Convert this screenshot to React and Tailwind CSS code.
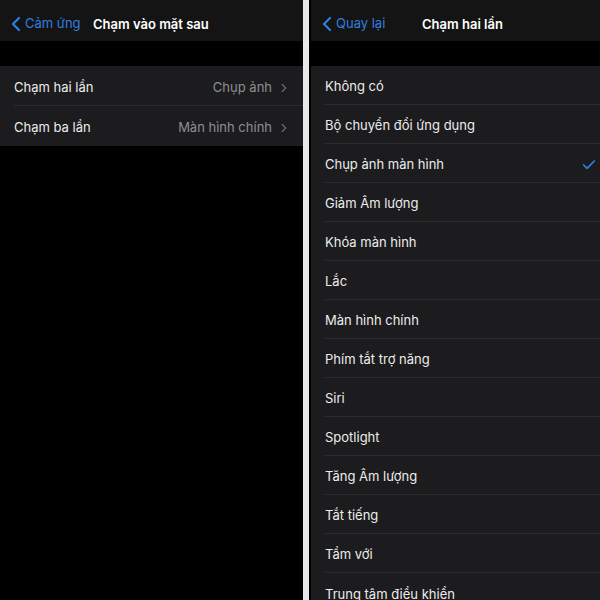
import { ChevronLeft, ChevronRight, Check } from 'lucide-react';

const backTaps = [
  { label: 'Chạm hai lần', value: 'Chụp ảnh' },
  { label: 'Chạm ba lần', value: 'Màn hình chính' },
];

const actions = [
  'Không có',
  'Bộ chuyển đổi ứng dụng',
  'Chụp ảnh màn hình',
  'Giảm Âm lượng',
  'Khóa màn hình',
  'Lắc',
  'Màn hình chính',
  'Phím tắt trợ năng',
  'Siri',
  'Spotlight',
  'Tăng Âm lượng',
  'Tắt tiếng',
  'Tầm với',
  'Trung tâm điều khiển',
];

function NavBar({ back, title, titleClass }) {
  return (
    <div className="relative h-[41px] bg-[#141414] flex items-center shrink-0 pt-[7px]">
      <div className="flex items-center text-[#2f7fe0] text-[13px] pl-[4px]">
        <ChevronLeft size={24} strokeWidth={2.2} className="-mr-[3px]" />
        <span>{back}</span>
      </div>
      <span className={`absolute top-[25px] -translate-y-1/2 text-white font-semibold text-[13px] ${titleClass}`}>
        {title}
      </span>
    </div>
  );
}

export default function App() {
  return (
    <div
      className="w-[600px] h-[600px] flex bg-black overflow-hidden"
      style={{ fontFamily: 'Inter, "Noto Sans", sans-serif' }}
    >
      {/* Back tap settings */}
      <div className="w-[303px] flex flex-col shrink-0">
        <NavBar back="Cảm ứng" title="Chạm vào mặt sau" titleClass="left-[93px]" />
        <div className="h-[25px]" />
        <div className="bg-[#1c1c1e]">
          {backTaps.map((row, i) => (
            <div key={row.label} className="pl-[14px]">
              <div
                className={`h-[40px] flex items-center pt-[4px] pr-[12px] ${
                  i < backTaps.length - 1 ? 'border-b border-[#2c2c2e]' : ''
                }`}
              >
                <span className="text-[#ececec] text-[13px]">{row.label}</span>
                <span className="ml-auto text-[#8e8e93] text-[13px]">{row.value}</span>
                <ChevronRight size={14} strokeWidth={2} className="text-[#6b6b70] ml-[5px]" />
              </div>
            </div>
          ))}
        </div>
      </div>

      <div className="w-[6px] bg-[#e8e8e8] shrink-0" />
      <div className="w-[2px] shrink-0" />

      {/* Double tap action picker */}
      <div className="flex-1 flex flex-col">
        <NavBar back="Quay lại" title="Chạm hai lần" titleClass="left-[111px]" />
        <div className="h-[25px] shrink-0" />
        <div className="bg-[#1c1c1e] flex-1">
          {actions.map((a, i) => (
            <div key={a} className="pl-[14px]">
              <div
                className={`h-[39px] flex items-center pt-[4px] pr-[3px] ${
                  i < actions.length - 1 ? 'border-b border-[#2c2c2e]' : ''
                }`}
              >
                <span className="text-[#ececec] text-[13px]">{a}</span>
                {a === 'Chụp ảnh màn hình' && (
                  <Check size={16} strokeWidth={2.6} className="ml-auto text-[#2f7fe0]" />
                )}
              </div>
            </div>
          ))}
        </div>
      </div>
    </div>
  );
}
